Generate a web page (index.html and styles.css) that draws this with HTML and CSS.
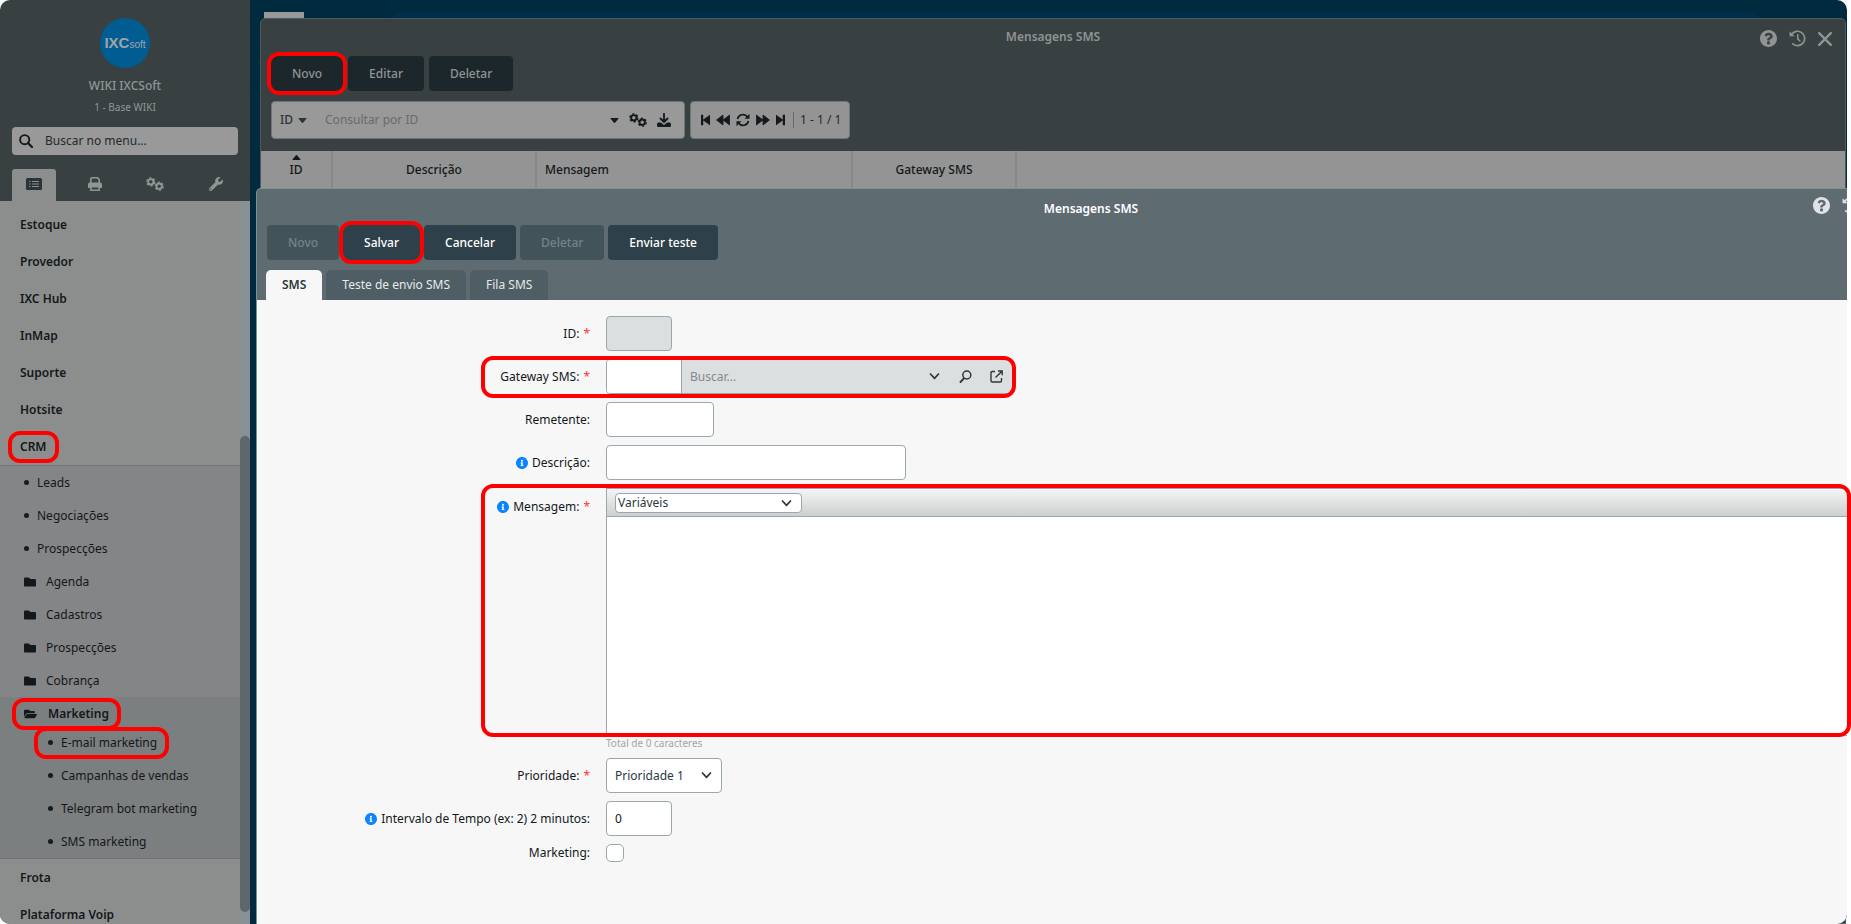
FILE: index.html
```html
<!DOCTYPE html>
<html lang="pt-BR">
<head>
<meta charset="utf-8">
<title>Mensagens SMS</title>
<link rel="stylesheet" href="styles.css">
</head>
<body>
<svg class="sprite" aria-hidden="true">
  <symbol id="search" viewBox="0 0 14 14"><circle cx="5.7" cy="5.7" r="4.6" fill="none" stroke="currentColor" stroke-width="1.9"/><path d="M9 9l4.2 4.2" stroke="currentColor" stroke-width="2.2" stroke-linecap="round"/></symbol>
  <symbol id="list" viewBox="0 0 16 12"><rect width="16" height="12" rx="1.5" fill="currentColor"/><path d="M3 3.5h1.500M3 6h1.500M3 8.500h1.500M6 3.500h7M6 6h7M6 8.500h7" stroke="#8c8e8d" stroke-width="1.200"/></symbol>
  <symbol id="print" viewBox="0 0 14 14"><path d="M2.800 6V2a1.200 1.200 0 0 1 1.200-1.200h5.600L11.200 2.500V6" fill="none" stroke="currentColor" stroke-width="1.600"/><path fill="currentColor" fill-rule="evenodd" d="M1.800 5.500h10.400A1.800 1.800 0 0 1 14 7.300V10.500a.5.5 0 0 1-.5.5H12V9H2v2H.5a.5.5 0 0 1-.5-.5V7.300A1.800 1.800 0 0 1 1.800 5.500zM2 9h10v4.300a.7.7 0 0 1-.7.7H2.700a.7.7 0 0 1-.7-.7zm1.600 1.400v2.100h6.800v-2.100z"/></symbol>
  <symbol id="cogs" viewBox="0 0 18 14"><g fill="none" stroke="currentColor"><circle cx="4.800" cy="4.800" r="2.700" stroke-width="1.900"/><circle cx="4.800" cy="4.800" r="4" stroke-width="1.300" stroke-dasharray="2.190 2"/><circle cx="13.200" cy="9.200" r="2.700" stroke-width="1.900"/><circle cx="13.200" cy="9.200" r="4" stroke-width="1.300" stroke-dasharray="2.190 2"/></g></symbol>
  <symbol id="wrench" viewBox="0 0 512 512"><path fill="currentColor" d="M507.730 109.100c-2.240-9.030-13.540-12.090-20.120-5.510l-74.360 74.360-67.880-11.310-11.310-67.880 74.360-74.360c6.620-6.620 3.430-17.900-5.660-20.160-47.380-11.740-99.550.910-136.580 37.930-39.640 39.640-50.550 97.100-34.050 147.200L18.740 402.760c-24.990 24.990-24.990 65.510 0 90.500 24.990 24.990 65.510 24.990 90.500 0l213.210-213.210c50.120 16.710 107.470 5.680 147.370-34.220 37.070-37.070 49.700-89.320 37.910-136.730zM64 472c-13.250 0-24-10.750-24-24 0-13.260 10.750-24 24-24s24 10.740 24 24c0 13.250-10.750 24-24 24z"/></symbol>
  <symbol id="folder" viewBox="0 0 512 512"><path fill="currentColor" d="M464 128H272l-64-64H48C21.490 64 0 85.490 0 112v288c0 26.510 21.490 48 48 48h416c26.510 0 48-21.490 48-48V176c0-26.510-21.490-48-48-48z"/></symbol>
  <symbol id="folder-open" viewBox="0 0 576 512"><path fill="currentColor" d="M572.694 292.093L500.270 416.248A63.997 63.997 0 0 1 444.989 448H45.025c-18.523 0-30.064-20.093-20.731-36.093l72.424-124.155A64 64 0 0 1 152 256h399.964c18.523 0 30.064 20.093 20.730 36.093zM152 224h328v-48c0-26.510-21.490-48-48-48H272l-64-64H48C21.490 64 0 85.490 0 112v278.046l69.077-118.418C86.214 242.250 117.989 224 152 224z"/></symbol>
  <symbol id="help" viewBox="8 8 496 496"><path fill="currentColor" d="M504 256c0 136.997-111.043 248-248 248S8 392.997 8 256C8 119.083 119.043 8 256 8s248 111.083 248 248zM262.655 90c-54.497 0-89.255 22.957-116.549 63.758-3.536 5.286-2.353 12.415 2.715 16.258l34.699 26.310c5.205 3.947 12.621 3.008 16.665-2.122 17.864-22.658 30.113-35.797 57.303-35.797 20.429 0 45.698 13.148 45.698 32.958 0 14.976-12.363 22.667-32.534 33.976C247.128 238.528 216 254.941 216 296v4c0 6.627 5.373 12 12 12h56c6.627 0 12-5.373 12-12v-1.333c0-28.462 83.186-29.647 83.186-106.667 0-58.002-60.165-102-116.531-102zM256 338c-25.365 0-46 20.635-46 46 0 25.364 20.635 46 46 46s46-20.636 46-46c0-25.365-20.635-46-46-46z"/></symbol>
  <symbol id="info" viewBox="8 8 496 496"><path fill="currentColor" d="M256 8C119.043 8 8 119.083 8 256c0 136.997 111.043 248 248 248s248-111.003 248-248C504 119.083 392.957 8 256 8zm0 110c23.196 0 42 18.804 42 42s-18.804 42-42 42-42-18.804-42-42 18.804-42 42-42zm56 254c0 6.627-5.373 12-12 12h-88c-6.627 0-12-5.373-12-12v-24c0-6.627 5.373-12 12-12h12v-64h-12c-6.627 0-12-5.373-12-12v-24c0-6.627 5.373-12 12-12h64c6.627 0 12 5.373 12 12v100h12c6.627 0 12 5.373 12 12v24z"/></symbol>
  <symbol id="history" viewBox="0 0 18 18"><path d="M2.600 4.800A7.600 7.600 0 1 1 4 14.700" fill="none" stroke="currentColor" stroke-width="1.800" stroke-linecap="round"/><path d="M.6 1.200v5.300h5.300z" fill="currentColor"/><path d="M9.300 5v4.500l2.300 2.200" fill="none" stroke="currentColor" stroke-width="1.600" stroke-linecap="round"/></symbol>
  <symbol id="close" viewBox="0 0 14 14"><path d="M1.200 1.200l11.600 11.600M12.800 1.200L1.200 12.800" stroke="currentColor" stroke-width="2.400" stroke-linecap="round"/></symbol>
  <symbol id="caret" viewBox="0 0 8 5"><path d="M.5 0h7a.5.5 0 0 1 .4.800L4.500 4.700a.7.7 0 0 1-1 0L.1.800A.5.5 0 0 1 .5 0z" fill="currentColor"/></symbol>
  <symbol id="download" viewBox="0 0 14 14"><path d="M7 .8v8M3.500 5.500L7 9l3.500-3.500" fill="none" stroke="currentColor" stroke-width="1.800" stroke-linecap="round" stroke-linejoin="round"/><path d="M1.500 9.500h2.300L7 12l3.200-2.500h2.300A1.500 1.500 0 0 1 14 11v1.500a1.500 1.500 0 0 1-1.500 1.500h-11A1.500 1.500 0 0 1 0 12.500V11a1.500 1.500 0 0 1 1.500-1.500z" fill="currentColor"/></symbol>
  <symbol id="first" viewBox="0 0 9 12"><path d="M0 1h2v10H0zM9 1v10L2 6z" fill="currentColor" stroke="currentColor" stroke-width=".5" stroke-linejoin="round"/></symbol>
  <symbol id="prev" viewBox="0 0 14 12"><path d="M7 1v10L.500 6zM13.700 1v10L7 6z" fill="currentColor" stroke="currentColor" stroke-width=".8" stroke-linejoin="round"/></symbol>
  <symbol id="refresh" viewBox="0 0 14 14"><path d="M1.500 6A5.600 5.600 0 0 1 11.500 4M12.500 8A5.600 5.600 0 0 1 2.500 10" fill="none" stroke="currentColor" stroke-width="1.700"/><path d="M13.500.8v5H8.600zM.5 13.200v-5h4.900z" fill="currentColor"/></symbol>
  <symbol id="chevron" viewBox="0 0 10 7"><path d="M1 1l4 4.300L9 1" fill="none" stroke="currentColor" stroke-width="1.700" stroke-linecap="round" stroke-linejoin="round"/></symbol>
  <symbol id="lens" viewBox="0 0 12 13"><circle cx="7.300" cy="5" r="4" fill="none" stroke="currentColor" stroke-width="1.500"/><path d="M4.400 8.300L1 12" stroke="currentColor" stroke-width="1.900" stroke-linecap="round"/></symbol>
  <symbol id="external" viewBox="0 0 13 13"><path d="M5 1.500H2.200A1.200 1.200 0 0 0 1 2.700v8.100A1.200 1.200 0 0 0 2.200 12h8.100a1.200 1.200 0 0 0 1.200-1.200V8M8 1h4.200v4.200M12 1.200L5.500 7.500" fill="none" stroke="currentColor" stroke-width="1.400"/></symbol>
</svg>

<div class="screen">
  <aside class="sidebar">
    <header class="profile">
      <div class="logo"><b>IXC</b><span>soft</span></div>
      <div class="company">WIKI IXCSoft</div>
      <div class="branch">1 - Base WIKI</div>
      <label class="menu-search"><svg class="i14"><use href="#search"/></svg><input type="text" placeholder="Buscar no menu..." aria-label="Buscar no menu"></label>
      <nav class="side-tabs">
        <button class="active" aria-label="Menu"><svg class="i16x12"><use href="#list"/></svg></button>
        <button aria-label="Imprimir"><svg class="i14"><use href="#print"/></svg></button>
        <button aria-label="Configurações"><svg class="i18x14"><use href="#cogs"/></svg></button>
        <button aria-label="Ferramentas"><svg class="i14"><use href="#wrench"/></svg></button>
      </nav>
    </header>
    <div class="menu-area">
      <nav class="menu">
        <a href="#">Estoque</a>
        <a href="#">Provedor</a>
        <a href="#">IXC Hub</a>
        <a href="#">InMap</a>
        <a href="#">Suporte</a>
        <a href="#">Hotsite</a>
        <a href="#"><span class="ring ring-crm">CRM</span></a>
        <div class="submenu">
          <a href="#"><i class="dot"></i>Leads</a>
          <a href="#"><i class="dot"></i>Negociações</a>
          <a href="#"><i class="dot"></i>Prospecções</a>
          <a href="#"><svg class="fold"><use href="#folder"/></svg>Agenda</a>
          <a href="#"><svg class="fold"><use href="#folder"/></svg>Cadastros</a>
          <a href="#"><svg class="fold"><use href="#folder"/></svg>Prospecções</a>
          <a href="#"><svg class="fold"><use href="#folder"/></svg>Cobrança</a>
          <div class="group">
            <a class="group-title" href="#"><span class="ring ring-marketing"><svg class="fold-open"><use href="#folder-open"/></svg>Marketing</span></a>
            <a href="#"><span class="ring ring-email"><i class="dot"></i>E-mail marketing</span></a>
            <a href="#"><i class="dot"></i>Campanhas de vendas</a>
            <a href="#"><i class="dot"></i>Telegram bot marketing</a>
            <a href="#"><i class="dot"></i>SMS marketing</a>
          </div>
        </div>
        <a href="#">Frota</a>
        <a href="#">Plataforma Voip</a>
      </nav>
      <div class="scroll"><div class="thumb"></div></div>
    </div>
  </aside>

  <main class="desktop">
    <div class="backdrop"><div class="tile"></div><div class="band"></div></div>

    <section class="window list-window">
      <header class="titlebar">
        <h1>Mensagens SMS</h1>
        <div class="tools">
          <button aria-label="Ajuda"><svg class="i17"><use href="#help"/></svg></button>
          <button aria-label="Histórico"><svg class="i17"><use href="#history"/></svg></button>
          <button aria-label="Fechar"><svg class="i14"><use href="#close"/></svg></button>
        </div>
      </header>
      <div class="actions">
        <button class="btn ring ring-btn">Novo</button>
        <button class="btn">Editar</button>
        <button class="btn">Deletar</button>
      </div>
      <div class="filters">
        <div class="box query">
          <button class="field-pick">ID <svg class="i8x5"><use href="#caret"/></svg></button>
          <input type="text" placeholder="Consultar por ID" aria-label="Consultar por ID">
          <button aria-label="Opções"><svg class="i8x5"><use href="#caret"/></svg></button>
          <button aria-label="Configurar"><svg class="i18x14"><use href="#cogs"/></svg></button>
          <button aria-label="Exportar"><svg class="i14"><use href="#download"/></svg></button>
        </div>
        <div class="box pager">
          <button aria-label="Primeira"><svg class="i9x12"><use href="#first"/></svg></button>
          <button aria-label="Anterior"><svg class="i14x12"><use href="#prev"/></svg></button>
          <button aria-label="Atualizar"><svg class="i14"><use href="#refresh"/></svg></button>
          <button class="flip" aria-label="Próxima"><svg class="i14x12"><use href="#prev"/></svg></button>
          <button class="flip" aria-label="Última"><svg class="i9x12"><use href="#first"/></svg></button>
          <span>1 - 1 / 1</span>
        </div>
      </div>
      <table class="grid">
        <colgroup><col class="c-id"><col class="c-desc"><col class="c-msg"><col class="c-gate"><col></colgroup>
        <thead><tr><th><svg class="i8x5 sort"><use href="#caret"/></svg>ID</th><th>Descrição</th><th class="left">Mensagem</th><th>Gateway SMS</th><th></th></tr></thead>
      </table>
    </section>

    <section class="window form-window">
      <header class="titlebar">
        <h1>Mensagens SMS</h1>
        <div class="tools">
          <button aria-label="Ajuda"><svg class="i17"><use href="#help"/></svg></button>
          <button aria-label="Histórico"><svg class="i17"><use href="#history"/></svg></button>
        </div>
      </header>
      <div class="actions">
        <button class="btn" disabled>Novo</button>
        <button class="btn ring ring-btn">Salvar</button>
        <button class="btn">Cancelar</button>
        <button class="btn" disabled>Deletar</button>
        <button class="btn">Enviar teste</button>
      </div>
      <nav class="tabs">
        <button class="active">SMS</button>
        <button>Teste de envio SMS</button>
        <button>Fila SMS</button>
      </nav>
      <form class="form">
        <div class="row">
          <label for="id">ID: <em>*</em></label>
          <input class="ctl w-small" id="id" type="text" disabled>
        </div>
        <div class="row ring ring-gateway">
          <label for="gateway">Gateway SMS: <em>*</em></label>
          <div class="lookup">
            <input id="gateway" type="text">
            <input class="lookup-text" type="text" placeholder="Buscar..." aria-label="Buscar gateway">
            <button type="button" aria-label="Abrir lista"><svg class="i11x7"><use href="#chevron"/></svg></button>
            <button type="button" aria-label="Pesquisar"><svg class="i13"><use href="#lens"/></svg></button>
            <button type="button" aria-label="Abrir cadastro"><svg class="i13"><use href="#external"/></svg></button>
          </div>
        </div>
        <div class="row">
          <label for="sender">Remetente:</label>
          <input class="ctl w-medium" id="sender" type="text">
        </div>
        <div class="row">
          <label for="desc"><svg class="i12"><use href="#info"/></svg>Descrição:</label>
          <input class="ctl w-large" id="desc" type="text">
        </div>
        <div class="row message ring ring-message">
          <label for="msg"><svg class="i12"><use href="#info"/></svg>Mensagem: <em>*</em></label>
          <div class="editor">
            <div class="editor-bar">
              <div class="select vars"><select aria-label="Variáveis"><option>Variáveis</option></select><svg class="i11x7"><use href="#chevron"/></svg></div>
            </div>
            <textarea id="msg"></textarea>
          </div>
        </div>
        <div class="count">Total de 0 caracteres</div>
        <div class="row">
          <label for="prio">Prioridade: <em>*</em></label>
          <div class="select prio"><select id="prio"><option>Prioridade 1</option></select><svg class="i11x7"><use href="#chevron"/></svg></div>
        </div>
        <div class="row">
          <label for="interval"><svg class="i12"><use href="#info"/></svg>Intervalo de Tempo (ex: 2) 2 minutos:</label>
          <input class="ctl w-small" id="interval" type="text" value="0">
        </div>
        <div class="row">
          <label class="short" for="mkt">Marketing:</label>
          <input class="check" id="mkt" type="checkbox">
        </div>
      </form>
    </section>
  </main>
</div>
</body>
</html>
```
FILE: styles.css
```css
*, *::after { box-sizing: border-box; }
body { margin: 0; background: #fff; overflow: hidden; font: 12px/16px "Noto Sans", sans-serif; color: #12181b; }
button, input, select, textarea { font: inherit; color: inherit; margin: 0; padding: 0; border: 0; background: none; outline: 0; }
input { min-width: 0; }
a { color: inherit; text-decoration: none; }
svg { display: block; flex: none; }
.sprite { display: none; }
.i17 { width: 17px; height: 17px; }
.i14 { width: 14px; height: 14px; }
.i13 { width: 13px; height: 13px; }
.i12 { width: 12px; height: 12px; }
.i16x12 { width: 16px; height: 12px; }
.i18x14 { width: 18px; height: 14px; }
.i14x12 { width: 14px; height: 12px; }
.i9x12 { width: 9px; height: 12px; }
.i8x5 { width: 9px; height: 5px; }
.i11x7 { width: 11px; height: 7px; }

.screen { display: flex; height: 100vh; margin-right: 4px; }

/* red callouts */
.ring { position: relative; }
.ring::after { content: ""; position: absolute; inset: -4px; border: 4px solid #f00; border-radius: 12px; pointer-events: none; z-index: 2; }
.ring-crm::after { inset: -8px -12px; }
.ring-marketing::after { inset: -8px -12px; }
.ring-email::after { inset: -8px -12px -8px -14px; }
.ring-gateway::after { inset: -3px auto -4px 224px; width: 535px; }
.ring-message::after { inset: -4px -4px -1px 224px; }

/* sidebar */
.sidebar { display: flex; flex-direction: column; flex: none; width: 250px; overflow: hidden; border-radius: 10px 0 0 10px; background: #384042; }
.profile { flex: none; display: flex; flex-direction: column; align-items: center; padding: 18px 12px 0; color: #929596; }
.logo { display: flex; align-items: baseline; justify-content: center; width: 50px; height: 50px; border-radius: 50%; background: #005c91; color: #a0a5a8; font: 10px/50px "Liberation Sans", sans-serif; }
.logo b { font-size: 15px; }
.company { margin-top: 10px; font-weight: 500; }
.branch { margin-top: 5px; font-size: 10px; }
.menu-search { display: flex; align-items: center; gap: 12px; width: 100%; height: 28px; margin-top: 12px; padding: 0 7px; border-radius: 4px; background: #999; color: #14191c; }
.menu-search input { flex: 1; }
.menu-search input::placeholder { color: #24292c; opacity: 1; }
.side-tabs { display: grid; grid-template-columns: 44px 44px 44px 44px; justify-content: space-between; width: 100%; margin-top: 14px; }
.side-tabs button { display: grid; place-items: center; height: 32px; padding-bottom: 2px; border-radius: 3px 3px 0 0; color: #929596; }
.side-tabs .active { background: #8c8e8d; color: #2a3438; }
.menu-area { display: flex; flex: 1; min-height: 0; background: #8c8e8d; }
.menu { flex: 1; min-width: 0; padding-top: 5px; overflow: hidden; }
.menu a { display: flex; align-items: center; height: 37px; padding-left: 20px; font-weight: 600; }
.menu .submenu { border-top: 1px solid #757879; border-bottom: 1px solid #6f7475; background: #848587; }
.submenu a { height: 33px; padding-left: 24px; font-weight: 400; }
.dot { width: 5px; height: 5px; margin-right: 8px; border-radius: 50%; background: #141c1f; }
.fold { width: 12px; height: 12px; margin-right: 10px; }
.fold-open { width: 13px; height: 12px; margin-right: 11px; }
.group { background: #7c7f80; }
.group a { padding-left: 48px; }
.group .group-title { height: 29px; padding: 4px 0 0 24px; font-weight: 600; }
.group .ring { display: flex; align-items: center; }
.scroll { flex: none; width: 10px; padding: 235px 0 12px; background: #899195; }
.thumb { height: 100%; border-radius: 5px; background: #5e686a; }

/* desktop */
.desktop { position: relative; flex: 1; min-width: 0; border-radius: 0 10px 10px 0; background: #002b3f; }
.backdrop { display: flex; gap: 80px; padding: 12px 82px 0 14px; }
.tile { width: 40px; height: 10px; background: #999; }
.band { flex: 1; height: 40px; border-radius: 20px; background: #002f4b; }
.window { position: absolute; border: 1px solid #4b5a60; border-radius: 5px 5px 0 0; }
.list-window { top: 18px; left: 10px; right: 1px; bottom: 0; background: #384042; }
.form-window { top: 188px; left: 6px; right: 0; bottom: 0; display: flex; flex-direction: column; border-width: 1px 0 0 1px; border-color: #7d8f97; border-radius: 5px 0 10px 0; background: #5e6b71; }
.titlebar { display: grid; align-items: start; overflow: hidden; }
.titlebar > * { grid-area: 1 / 1; }
.titlebar h1 { margin: 0; text-align: center; font-size: 12px; font-weight: 600; line-height: 18px; }
.tools { display: flex; align-items: center; justify-self: end; }
.list-window .titlebar { height: 37px; padding-top: 9px; color: #909394; }
.list-window .tools { gap: 12px; padding: 2px 13px 0 0; }
.form-window .titlebar { height: 36px; padding-top: 8px; color: #fff; }
.form-window h1 { padding: 3px 0 0 78px; }
.form-window .tools { gap: 12px; margin-right: -12px; color: #dfe3e5; }
.actions { display: flex; gap: 5px; padding-left: 10px; }
.form-window .actions { gap: 4px; }
.btn { height: 35px; padding: 0 21px; border-radius: 4px; background: #2e4049; color: #fff; font-weight: 500; }
.btn:disabled { background: #43535a; color: #75838a; }
.list-window .btn { background: #1c272b; color: #929596; }
.filters { display: flex; gap: 5px; padding: 10px 0 12px 10px; }
.box { display: flex; align-items: center; height: 38px; border: 1px solid #6c7679; border-radius: 4px; background: #999; color: #14191c; }
.query { width: 414px; padding: 0 13px 0 8px; gap: 10px; }
.query input { flex: 1; padding-left: 8px; }
.query input::placeholder { color: #686b6c; opacity: 1; }
.field-pick { display: flex; align-items: center; gap: 5px; font-weight: 500; color: #2c3437; }
.pager { width: 160px; gap: 6px; padding: 0 8px 0 10px; background: #949494; }
.pager .flip svg { transform: scaleX(-1); }
.pager span { margin-left: 2px; padding-left: 6px; border-left: 1px solid #676b6d; white-space: nowrap; color: #24292c; }
.grid { width: 100%; border-collapse: separate; border-spacing: 0; table-layout: fixed; background: #949494; }
.grid th { position: relative; height: 37px; padding: 0 8px; border-right: 2px solid #878989; font-weight: 500; }
.grid th:last-child { border: 0; }
.grid .left { text-align: left; }
.c-id { width: 72px; }
.c-desc { width: 204px; }
.c-msg { width: 316px; }
.c-gate { width: 164px; }
.sort { position: absolute; top: 4px; left: 31px; transform: scaleY(-1); }

.tabs { display: flex; gap: 4px; padding: 10px 0 0 9px; }
.tabs button { height: 30px; padding: 0 16px; border-radius: 5px 5px 0 0; background: #4f5e65; color: #e6eaec; }
.tabs .active { background: #f7f7f7; color: #2b383e; font-weight: 600; }

/* form */
.form { flex: 1; display: flex; flex-direction: column; gap: 8px; padding-top: 16px; border-radius: 0 0 10px 0; background: #f7f7f7; }
.row { display: grid; grid-template-columns: 333px minmax(0, 1fr); gap: 16px; align-items: start; }
.row label { display: flex; align-items: center; justify-content: flex-end; gap: 4px; height: 35px; white-space: nowrap; }
.row label.short { height: 18px; }
.row em { color: #f33; font-style: normal; }
.row label svg { color: #0a84ff; }
.ctl, .lookup { height: 35px; border: 1px solid #9aa7ac; border-radius: 4px; background: #fff; }
.ctl { padding: 0 8px; }
.ctl:disabled { background: #dcdfe0; }
.w-small { width: 66px; }
.w-medium { width: 108px; }
.w-large { width: 300px; }
.lookup { display: flex; width: 407px; overflow: hidden; background: #dcdfe0; color: #2b383e; }
.lookup input { width: 75px; padding: 0 8px; border-right: 1px solid #9aa7ac; background: #fff; }
.lookup .lookup-text { flex: 1; border: 0; background: none; }
.lookup input::placeholder { color: #858a8c; opacity: 1; }
.lookup button { display: grid; place-items: center; width: 31px; }
.message label { height: 38px; }
.editor { border: 1px solid #9aa7ac; border-width: 1px 0 0 1px; }
.editor-bar { height: 28px; padding: 4px 8px; border-bottom: 1px solid #9aa7ac; background: linear-gradient(#f4f5f5, #cdd0cf); }
.editor textarea { display: block; width: 100%; height: 219px; resize: none; background: #fff; border-bottom: 1px solid #9aa7ac; }
.select { display: grid; align-items: center; border: 1px solid #9aa7ac; border-radius: 4px; background: #fff; color: #2b383e; }
.select > * { grid-area: 1 / 1; }
.select select { appearance: none; width: 100%; height: 100%; }
.select svg { justify-self: end; margin-right: 9px; pointer-events: none; }
.vars { width: 187px; height: 20px; padding-left: 2px; }
.prio { width: 116px; height: 35px; padding-left: 8px; }
.count { margin: -8px 0 -1px 349px; font-size: 10px; line-height: 15px; color: #a2a5a6; }
.check { appearance: none; width: 18px; height: 18px; border: 1px solid #9aa7ac; border-radius: 5px; background: #fff; }
```
